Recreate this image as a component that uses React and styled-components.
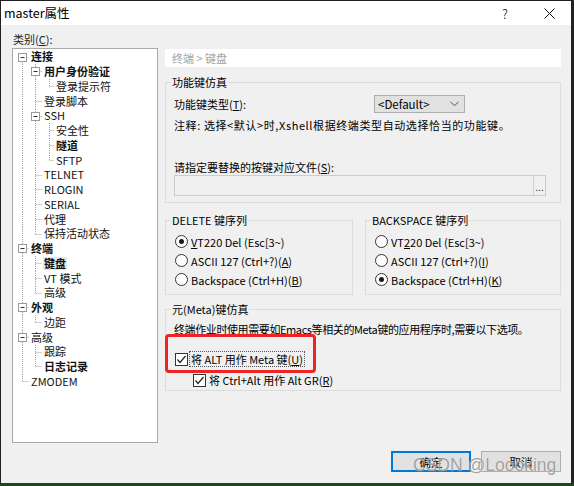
import React from "react";
import styled, { createGlobalStyle } from "styled-components";

const GlobalStyle = createGlobalStyle`
  html, body { margin: 0; padding: 0; background: #1e1e1e; }
  * { box-sizing: border-box; }
`;

const UI_FONT = `"Noto Sans CJK SC", "Noto Sans", sans-serif`;

const Screen = styled.div`
  width: 574px;
  height: 486px;
  display: flex;
  flex-direction: column;
  background: #222;
  overflow: hidden;
`;

const Window = styled.div`
  position: relative;
  margin: 1px 3px 0 1px;
  width: 570px;
  height: 482px;
  flex: none;
  background: #f0f0f0;
  display: flex;
  flex-direction: column;
  font-family: ${UI_FONT};
  color: #000;
`;

const Desktop = styled.div`
  flex: 1;
  background: #174a17;
`;

const TitleBar = styled.div`
  height: 24px;
  background: #fff;
  display: flex;
  align-items: center;
  flex: none;
`;

const TitleText = styled.div`
  padding-left: 3px;
  font-size: 12.5px;
  line-height: 24px;
  flex: 1;
`;

const CaptionButton = styled.div`
  width: 44px;
  height: 24px;
  display: flex;
  align-items: center;
  justify-content: center;
  font-size: 13px;
  font-weight: 300;
  color: #111;
`;

const Body = styled.div`
  flex: 1;
  display: flex;
  flex-direction: column;
  padding: 7px 10px 0 11px;
  font-size: 11px;
`;

const CategoryLabel = styled.div`
  height: 14px;
  line-height: 14px;
  margin-bottom: 2px;
  padding-left: 1px;
  color: #222;
`;

const MainRow = styled.div`
  display: flex;
  gap: 7px;
  align-items: flex-start;
`;

const TreePanel = styled.div`
  width: 146px;
  height: 395px;
  flex: none;
  background: #fff;
  border: 1px solid #a9a9a9;
  padding-top: 0.5px;
  font-size: 11px;
`;

const TreeRow = styled.div`
  height: 14.75px;
  display: flex;
  align-items: center;
  white-space: nowrap;
`;

const TreeLabel = styled.span`
  font-weight: ${(p) => (p.$bold ? 700 : 400)};
  background: ${(p) => (p.$sel ? "#e5e5e5" : "transparent")};
  padding: 0 1px;
  line-height: 13px;
  color: #111;
`;

const RightPanel = styled.div`
  flex: 1;
  margin-top: 1px;
  display: flex;
  flex-direction: column;
`;

const Breadcrumb = styled.div`
  height: 18px;
  line-height: 18px;
  background: #fff;
  padding-left: 7px;
  color: #a3a3a3;
`;

const Group = styled.fieldset`
  margin: ${(p) => p.$mt || 0}px 0 0 0;
  padding: 0 14px ${(p) => p.$pb ?? 6}px 8px;
  border: 1px solid #dcdcdc;
  min-width: 0;
  width: ${(p) => (p.$w ? `${p.$w}px` : "auto")};
  flex: ${(p) => (p.$w ? "none" : "1")};
`;

const GroupTitle = styled.legend`
  padding: 0 1px;
  margin-left: -3px;
  line-height: 14px;
  font-size: 11px;
`;

const GroupRow = styled.div`
  display: flex;
  gap: 12px;
  margin-top: 10px;
`;

const FieldRow = styled.div`
  display: flex;
  align-items: center;
  height: 18px;
  margin-top: 6px;
`;

const FieldLabel = styled.div`
  width: 200px;
  flex: none;
`;

const Select = styled.div`
  width: 91px;
  height: 18px;
  border: 1px solid #adadad;
  background: #e1e1e1;
  display: flex;
  align-items: center;
  justify-content: space-between;
  padding: 0 5px 0 3px;
  font-size: 11.5px;
`;

const TextLine = styled.div`
  line-height: 16px;
  height: 16px;
  margin-top: ${(p) => p.$mt || 0}px;
  letter-spacing: ${(p) => p.$tracking || 0}px;
  white-space: nowrap;
`;

const FileField = styled.div`
  height: 21px;
  border: 1px solid #cccccc;
  background: #f0f0f0;
  display: flex;
  justify-content: flex-end;
`;

const BrowseButton = styled.div`
  width: 12px;
  border-left: 1px solid #d0d0d0;
  font-size: 10px;
  line-height: 10px;
  display: flex;
  align-items: flex-end;
  justify-content: center;
  padding-bottom: 3px;
  color: #333;
`;

const Options = styled.div`
  margin-top: 5px;
  display: flex;
  flex-direction: column;
`;

const OptionRow = styled.div`
  height: 19px;
  display: flex;
  align-items: center;
  gap: 3px;
  padding-left: 1px;
  white-space: nowrap;
`;

const RadioDot = styled.span`
  width: 13px;
  height: 13px;
  flex: none;
  border: 1px solid #333;
  border-radius: 50%;
  background: #fff;
  display: inline-flex;
  align-items: center;
  justify-content: center;
  &::after {
    content: "";
    width: 5px;
    height: 5px;
    border-radius: 50%;
    background: ${(p) => (p.$on ? "#1a1a1a" : "transparent")};
  }
`;

const CheckRow = styled.div`
  position: relative;
  height: 16px;
  display: flex;
  align-items: center;
  gap: 1px;
  margin-top: ${(p) => p.$mt || 0}px;
  padding-left: ${(p) => p.$indent || 1}px;
  white-space: nowrap;
`;

const CheckBox = styled.span`
  width: 13px;
  height: 13px;
  flex: none;
  border: 1px solid #333;
  background: #fff;
  display: inline-flex;
  align-items: center;
  justify-content: center;
`;

const CheckText = styled.span`
  border: 1px dotted ${(p) => (p.$focus ? "#555" : "transparent")};
  padding: 0 1px;
  line-height: 14px;
`;

const Annotation = styled.div`
  position: absolute;
  left: -9px;
  top: -17px;
  width: 151px;
  height: 39px;
  border: 3px solid #ee2424;
  border-radius: 4px;
  pointer-events: none;
`;

const ButtonRow = styled.div`
  display: flex;
  justify-content: flex-end;
  gap: 10px;
  margin-top: 8px;
`;

const DialogButton = styled.div`
  width: 80px;
  height: 21px;
  background: #e1e1e1;
  border: ${(p) => (p.$default ? "2px solid #0078d7" : "1px solid #adadad")};
  display: flex;
  align-items: center;
  justify-content: center;
  font-size: 11.5px;
`;

const Watermark = styled.div`
  position: absolute;
  left: 412px;
  top: 454px;
  font-family: "Liberation Sans", Arial, sans-serif;
  font-size: 17.5px;
  line-height: 20px;
  color: rgba(120, 120, 120, 0.7);
  text-shadow: 0 0 1px rgba(255, 255, 255, 0.9);
  pointer-events: none;
  white-space: nowrap;
`;

const tree = [
  { t: "连接", l: 0, exp: true, b: true },
  { t: "用户身份验证", l: 1, exp: true, b: true },
  { t: "登录提示符", l: 2 },
  { t: "登录脚本", l: 1 },
  { t: "SSH", l: 1, exp: true },
  { t: "安全性", l: 2 },
  { t: "隧道", l: 2, b: true },
  { t: "SFTP", l: 2 },
  { t: "TELNET", l: 1 },
  { t: "RLOGIN", l: 1 },
  { t: "SERIAL", l: 1 },
  { t: "代理", l: 1 },
  { t: "保持活动状态", l: 1 },
  { t: "终端", l: 0, exp: true, b: true },
  { t: "键盘", l: 1, b: true, sel: true },
  { t: "VT 模式", l: 1 },
  { t: "高级", l: 1 },
  { t: "外观", l: 0, exp: true, b: true },
  { t: "边距", l: 1 },
  { t: "高级", l: 0, exp: true },
  { t: "跟踪", l: 1 },
  { t: "日志记录", l: 1, b: true },
  { t: "ZMODEM", l: 0 },
];

const CX = [9.5, 22.5, 36.5];
const TX = [17, 30, 42];
const H = 14.75;
const MID = 7.5;

function isLast(i) {
  const L = tree[i].l;
  for (let j = i + 1; j < tree.length; j++) {
    if (tree[j].l < L) return true;
    if (tree[j].l === L) return false;
  }
  return true;
}

const rowsInfo = (() => {
  const notLast = [];
  return tree.map((row, i) => {
    const last = isLast(i);
    const anc = [];
    for (let a = 0; a < row.l; a++) if (notLast[a]) anc.push(a);
    notLast[row.l] = !last;
    return { ...row, last, anc, first: i === 0 };
  });
})();

const LINE = "#a0a0a0";

function TreeLines({ info }) {
  const x = CX[info.l];
  const y1 = info.first ? MID : 0;
  const y2 = info.last ? MID : H;
  return (
    <svg width={TX[info.l]} height={H} style={{ flex: "none", display: "block" }}>
      {info.anc.map((a) => (
        <line key={a} x1={CX[a]} y1={0} x2={CX[a]} y2={H} stroke={LINE} strokeDasharray="1 1" />
      ))}
      <line x1={x} y1={y1} x2={x} y2={y2} stroke={LINE} strokeDasharray="1 1" />
      <line x1={x} y1={MID} x2={TX[info.l] - 1} y2={MID} stroke={LINE} strokeDasharray="1 1" />
      {info.exp && (
        <g>
          <rect x={x - 4} y={MID - 4} width={8} height={8} fill="#fff" stroke="#9a9a9a" />
          <line x1={x - 2} y1={MID} x2={x + 2} y2={MID} stroke="#333" />
        </g>
      )}
    </svg>
  );
}

function Chevron() {
  return (
    <svg width="9" height="6" viewBox="0 0 9 6">
      <polyline points="0.5,0.8 4.5,4.8 8.5,0.8" fill="none" stroke="#555" strokeWidth="1" />
    </svg>
  );
}

function CheckMark() {
  return (
    <svg width="11" height="11" viewBox="0 0 11 11">
      <polyline points="1.5,5.5 4,8.5 9.5,2" fill="none" stroke="#222" strokeWidth="1.2" />
    </svg>
  );
}

function CloseGlyph() {
  return (
    <svg width="11" height="11" viewBox="0 0 11 11">
      <line x1="0.5" y1="0.5" x2="10.5" y2="10.5" stroke="#111" strokeWidth="1" />
      <line x1="10.5" y1="0.5" x2="0.5" y2="10.5" stroke="#111" strokeWidth="1" />
    </svg>
  );
}

function Radio({ on, children }) {
  return (
    <OptionRow>
      <RadioDot $on={on} />
      <span>{children}</span>
    </OptionRow>
  );
}

export default function App() {
  return (
    <Screen>
      <GlobalStyle />
      <Window>
        <TitleBar>
          <TitleText>master属性</TitleText>
          <CaptionButton>?</CaptionButton>
          <CaptionButton>
            <CloseGlyph />
          </CaptionButton>
        </TitleBar>
        <Body>
          <CategoryLabel>
            类别(<u>C</u>):
          </CategoryLabel>
          <MainRow>
            <TreePanel>
              {rowsInfo.map((info, i) => (
                <TreeRow key={i}>
                  <TreeLines info={info} />
                  <TreeLabel $bold={info.b} $sel={info.sel}>
                    {info.t}
                  </TreeLabel>
                </TreeRow>
              ))}
            </TreePanel>
            <RightPanel>
              <Breadcrumb>终端 &gt; 键盘</Breadcrumb>
              <Group $mt={8} $pb={6}>
                <GroupTitle>功能键仿真</GroupTitle>
                <FieldRow>
                  <FieldLabel>
                    功能键类型(<u>T</u>):
                  </FieldLabel>
                  <Select>
                    <span>&lt;Default&gt;</span>
                    <Chevron />
                  </Select>
                </FieldRow>
                <TextLine $mt={4} $tracking={0.6}>
                  注释: 选择&lt;默认&gt;时,Xshell根据终端类型自动选择恰当的功能键。
                </TextLine>
                <TextLine $mt={26}>
                  请指定要替换的按键对应文件(<u>S</u>):
                </TextLine>
                <FileField>
                  <BrowseButton>...</BrowseButton>
                </FileField>
              </Group>
              <GroupRow>
                <Group $w={188} $pb={5}>
                  <GroupTitle>DELETE 键序列</GroupTitle>
                  <Options>
                    <Radio on>
                      <u>V</u>T220 Del (Esc[3~)
                    </Radio>
                    <Radio>
                      ASCII 127 (Ctrl+?)(<u>A</u>)
                    </Radio>
                    <Radio>
                      Backspace (Ctrl+H)(<u>B</u>)
                    </Radio>
                  </Options>
                </Group>
                <Group $pb={5}>
                  <GroupTitle>BACKSPACE 键序列</GroupTitle>
                  <Options>
                    <Radio>
                      VT<u>2</u>20 Del (Esc[3~)
                    </Radio>
                    <Radio>
                      ASCII 127 (Ctrl+?)(<u>I</u>)
                    </Radio>
                    <Radio on>
                      Backspace (Ctrl+H)(<u>K</u>)
                    </Radio>
                  </Options>
                </Group>
              </GroupRow>
              <Group $mt={7} $pb={2}>
                <GroupTitle>元(Meta)键仿真</GroupTitle>
                <TextLine $mt={5} $tracking={-0.4}>
                  终端作业时使用需要如Emacs等相关的Meta键的应用程序时,需要以下选项。
                </TextLine>
                <CheckRow $mt={14}>
                  <CheckBox>
                    <CheckMark />
                  </CheckBox>
                  <CheckText $focus>
                    将 ALT 用作 Meta 键(<u>U</u>)
                  </CheckText>
                  <Annotation />
                </CheckRow>
                <CheckRow $mt={5} $indent={19}>
                  <CheckBox>
                    <CheckMark />
                  </CheckBox>
                  <CheckText>
                    将 Ctrl+Alt 用作 Alt GR(<u>R</u>)
                  </CheckText>
                </CheckRow>
              </Group>
            </RightPanel>
          </MainRow>
          <ButtonRow>
            <DialogButton $default>确定</DialogButton>
            <DialogButton>取消</DialogButton>
          </ButtonRow>
        </Body>
        <Watermark>CSDN @Loooking</Watermark>
      </Window>
      <Desktop />
    </Screen>
  );
}
